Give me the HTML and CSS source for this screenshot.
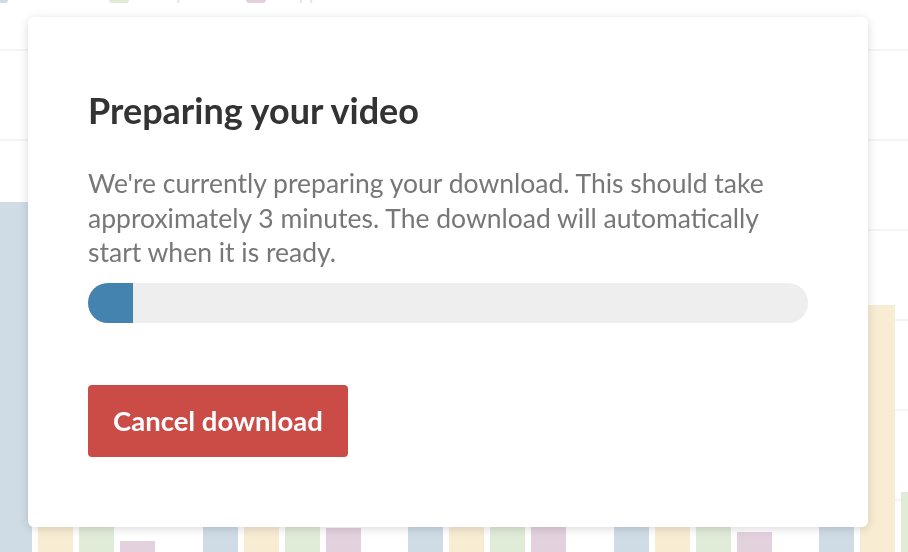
FILE: index.html
```html
<!DOCTYPE html>
<html lang="en">
<head>
    <meta charset="UTF-8">
    <meta name="viewport" content="width=device-width, initial-scale=1.0">
    <title>Preparing your video</title>
    <link rel="stylesheet" href="styles.css">
</head>
<body>
    <div class="chart">
        <ul class="legend">
            <li class="key"><span class="swatch blue"></span>Watched</li>
            <li class="key"><span class="swatch green"></span>Completed</li>
            <li class="key"><span class="swatch pink"></span>Skipped</li>
        </ul>
        <div class="plot">
            <div class="group">
                <div class="bar blue" style="height: 350px"></div>
                <div class="bar yellow" style="height: 120px"></div>
                <div class="bar green" style="height: 90px"></div>
                <div class="bar pink" style="height: 11px"></div>
            </div>
            <div class="group">
                <div class="bar blue" style="height: 140px"></div>
                <div class="bar yellow" style="height: 110px"></div>
                <div class="bar green" style="height: 80px"></div>
                <div class="bar pink" style="height: 24px"></div>
            </div>
            <div class="group">
                <div class="bar blue" style="height: 130px"></div>
                <div class="bar yellow" style="height: 170px"></div>
                <div class="bar green" style="height: 60px"></div>
                <div class="bar pink" style="height: 40px"></div>
            </div>
            <div class="group">
                <div class="bar blue" style="height: 90px"></div>
                <div class="bar yellow" style="height: 100px"></div>
                <div class="bar green" style="height: 70px"></div>
                <div class="bar pink" style="height: 20px"></div>
            </div>
            <div class="group">
                <div class="bar blue" style="height: 150px"></div>
                <div class="bar yellow" style="height: 247px"></div>
                <div class="bar green" style="height: 60px"></div>
                <div class="bar pink" style="height: 30px"></div>
            </div>
        </div>
    </div>

    <div class="modal">
        <h1 class="title">Preparing your video</h1>
        <p class="text">We're currently preparing your download. This should take approximately 3 minutes. The download will automatically start when it is ready.</p>
        <div class="progress">
            <div class="progress-fill" style="width: 45px"></div>
        </div>
        <button class="btn">Cancel download</button>
    </div>
</body>
</html>
```

FILE: styles.css
```css
* {
    box-sizing: border-box;
}

body {
    margin: 0;
    width: 908px;
    height: 552px;
    overflow: hidden;
    background: #fff;
    font-family: Lato, "Noto Sans", sans-serif;
}

.chart {
    height: 552px;
    display: flex;
    flex-direction: column;
}

.legend {
    list-style: none;
    margin: -17px 0 0 -12px;
    padding: 0;
    height: 20px;
    display: flex;
    align-items: center;
    gap: 20px;
    font-size: 18px;
    color: #e2e2e2;
}

.key {
    display: flex;
    align-items: center;
    gap: 10px;
}

.swatch {
    width: 20px;
    height: 20px;
    border-radius: 3px;
}

.plot {
    flex: 1;
    display: flex;
    align-items: flex-end;
    gap: 47.5px;
    margin-left: -3px;
    background-image: linear-gradient(to bottom, #f4f4f4 0, #f4f4f4 2px, transparent 2px);
    background-size: 100% 90px;
    background-position: 0 46px;
}

.group {
    display: flex;
    align-items: flex-end;
    gap: 6px;
}

.bar {
    width: 35px;
}

.blue {
    background: #cfdce6;
}

.yellow {
    background: #f8ecd3;
}

.green {
    background: #e0ebd8;
}

.pink {
    background: #e3d1de;
}

.modal {
    position: fixed;
    left: 28px;
    top: 17px;
    width: 840px;
    height: 510px;
    padding: 71px 60px;
    background: #fff;
    border-radius: 6px;
    box-shadow: 0 2px 10px rgba(0, 0, 0, .15);
}

.title {
    margin: 0 0 34px;
    font-size: 36px;
    line-height: 44px;
    font-weight: 700;
    color: #333;
}

.text {
    margin: 0 0 13px;
    font-size: 26.5px;
    line-height: 34.5px;
    color: #777;
}

.progress {
    height: 40px;
    border-radius: 20px;
    background: #eee;
    overflow: hidden;
    margin-bottom: 62px;
}

.progress-fill {
    height: 100%;
    background: #4482b0;
}

.btn {
    height: 72px;
    padding: 0 25px;
    border: 0;
    border-radius: 4px;
    background: #cb4c47;
    color: #fff;
    font-family: inherit;
    font-size: 27.5px;
    font-weight: 700;
}
```
